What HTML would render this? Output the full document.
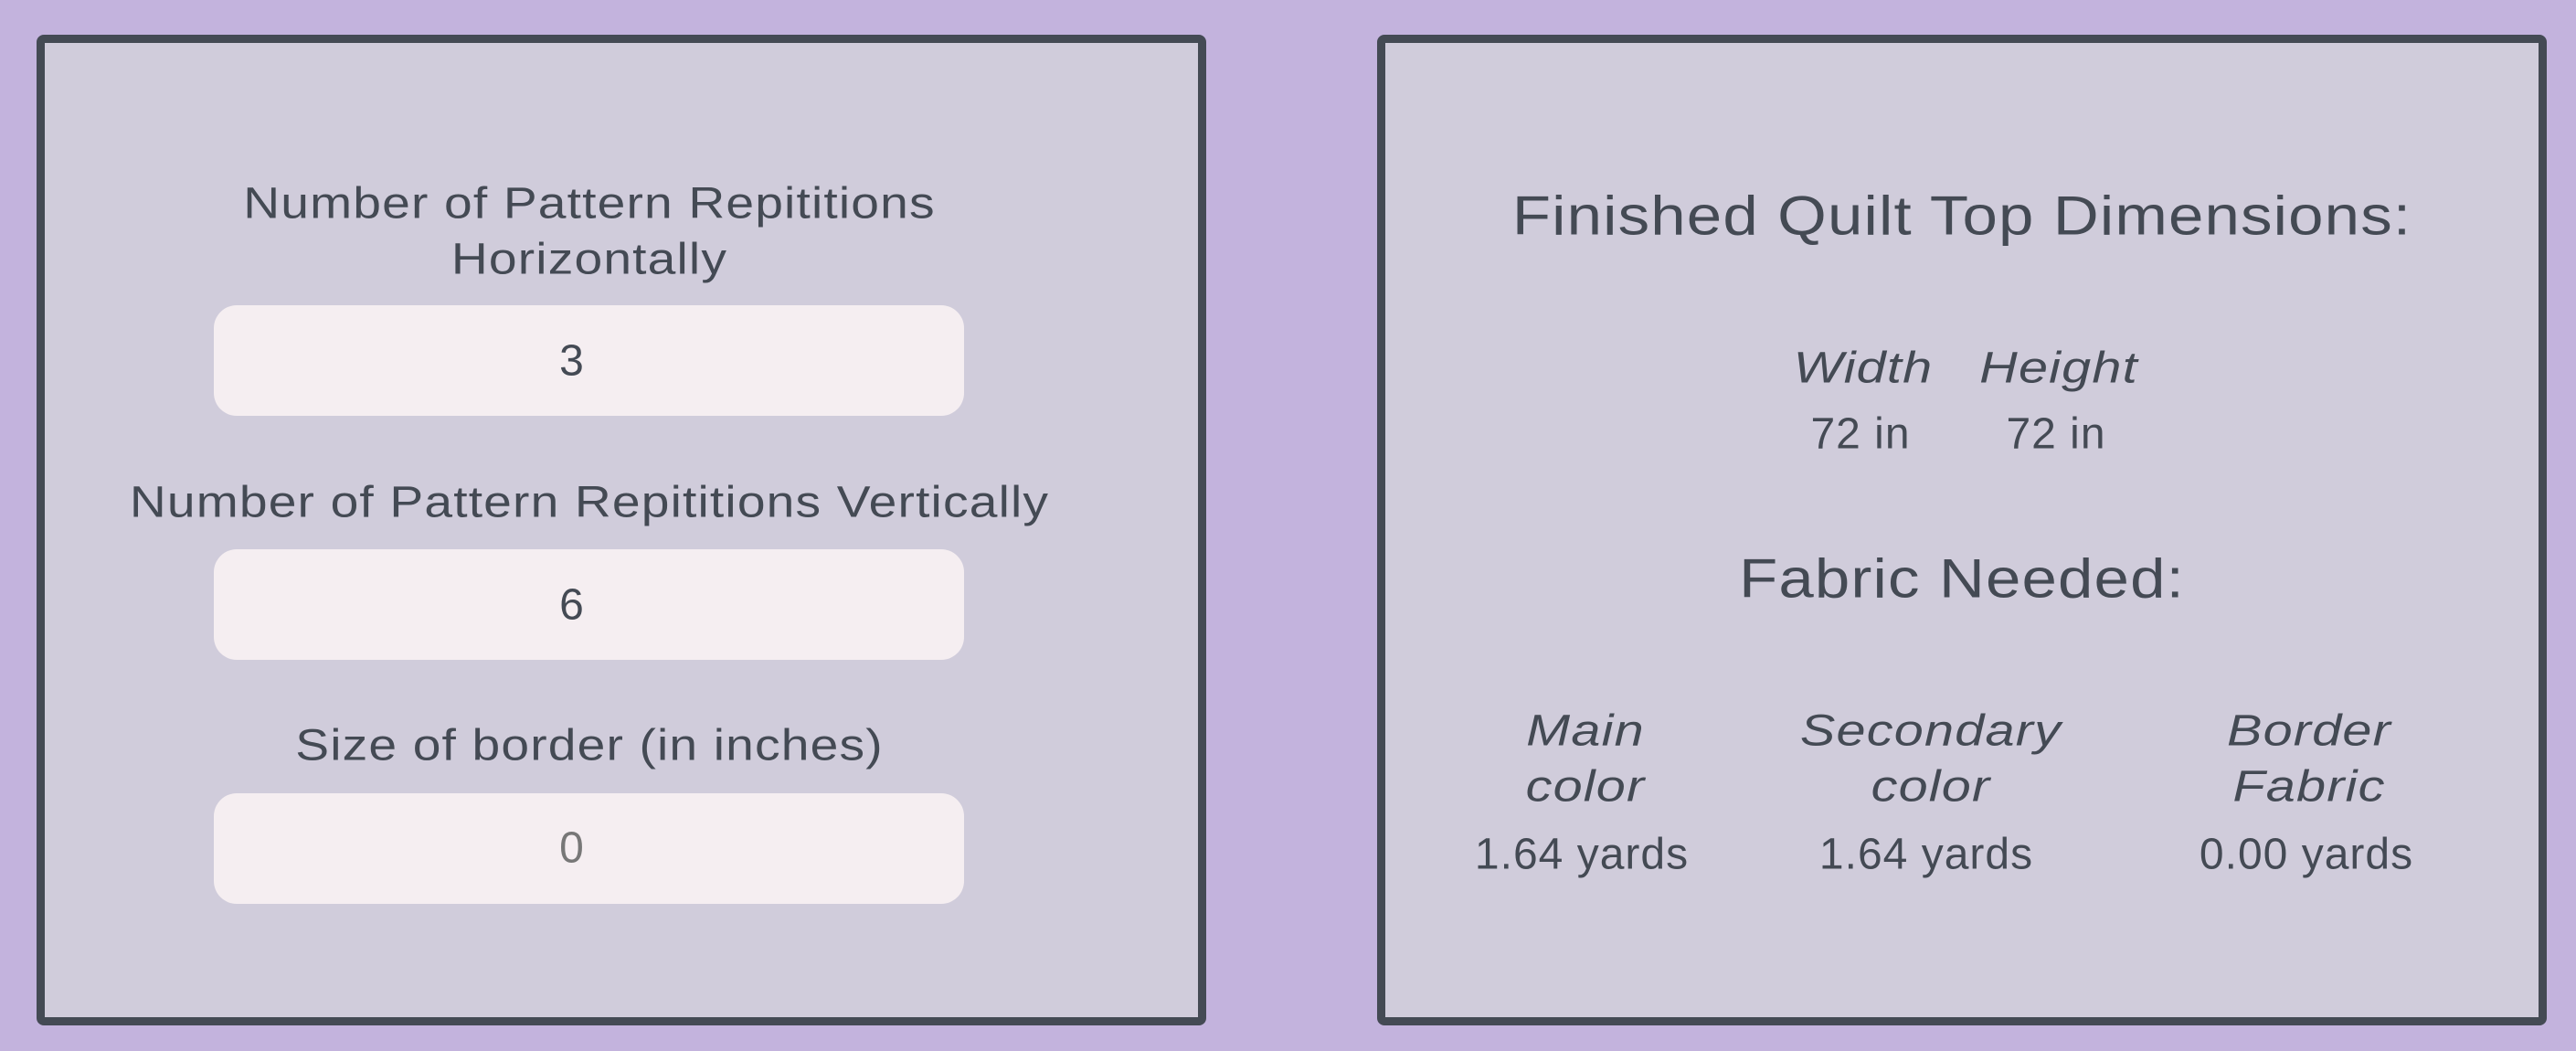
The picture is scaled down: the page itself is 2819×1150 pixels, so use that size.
<!DOCTYPE html>
<html><head><style>
body{margin:0;width:2819px;height:1150px;background:#c3b3dd;font-family:"Liberation Sans",sans-serif;color:#444a54;position:relative;overflow:hidden}
.p{position:absolute;top:38px;width:1262px;height:1066px;background:#d0ccdb;border:9px solid #444a54;border-radius:8px}
.t{position:absolute;white-space:nowrap;transform:translate(-50%,-50%);font-size:48px;letter-spacing:1px}
.w{transform:translate(-50%,-50%) scaleX(1.15)}
.in{position:absolute;left:234px;width:821px;height:121px;background:#f5eef1;border-radius:25px}
.i{font-style:italic;transform:translate(-50%,-50%) scaleX(1.2)}
</style></head><body>
<div class="p" style="left:40px"></div>
<div class="p" style="left:1507px"></div>
<div class="t w" style="left:645px;top:223px">Number of Pattern Repititions</div>
<div class="t w" style="left:645px;top:284px">Horizontally</div>
<div class="in" style="top:334px"></div><div class="t" style="left:626px;top:395px">3</div>
<div class="t w" style="left:645px;top:550px">Number of Pattern Repititions Vertically</div>
<div class="in" style="top:601px"></div><div class="t" style="left:626px;top:662px">6</div>
<div class="t w" style="left:645px;top:816px">Size of border (in inches)</div>
<div class="in" style="top:868px"></div><div class="t" style="left:626px;top:928px;color:#777">0</div>
<div class="t w" style="left:2147px;top:236px;font-size:60px">Finished Quilt Top Dimensions:</div>
<div class="t i" style="left:2039px;top:403px">Width</div>
<div class="t i" style="left:2253px;top:403px">Height</div>
<div class="t" style="left:2036px;top:475px">72 in</div>
<div class="t" style="left:2250px;top:475px">72 in</div>
<div class="t w" style="left:2147px;top:633px;font-size:60px">Fabric Needed:</div>
<div class="t i" style="left:1735px;top:800px">Main</div>
<div class="t i" style="left:1735px;top:861px">color</div>
<div class="t" style="left:1731px;top:935px">1.64 yards</div>
<div class="t i" style="left:2113px;top:800px">Secondary</div>
<div class="t i" style="left:2113px;top:861px">color</div>
<div class="t" style="left:2108px;top:935px">1.64 yards</div>
<div class="t i" style="left:2527px;top:800px">Border</div>
<div class="t i" style="left:2527px;top:861px">Fabric</div>
<div class="t" style="left:2524px;top:935px">0.00 yards</div>
</body></html>
